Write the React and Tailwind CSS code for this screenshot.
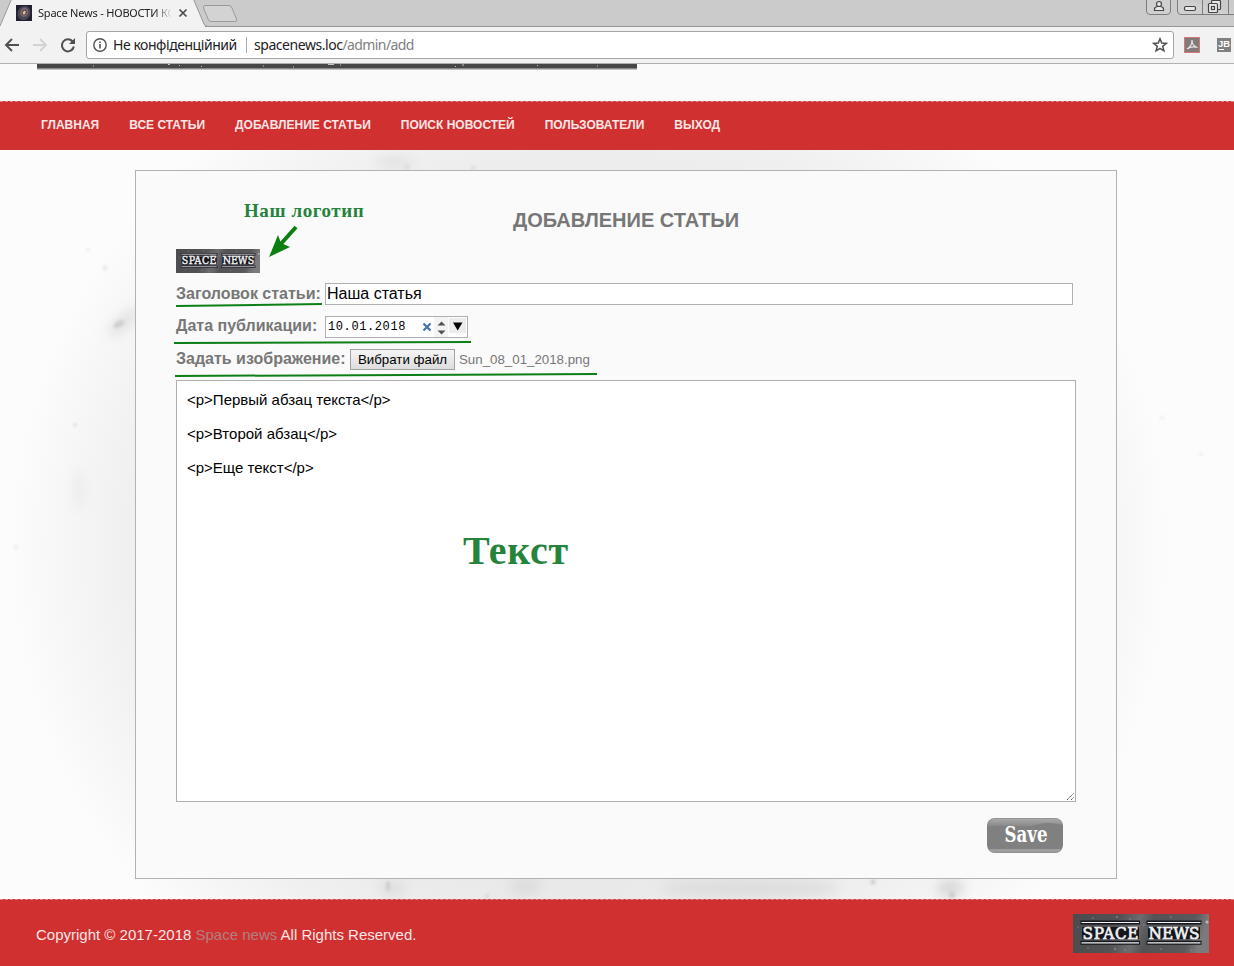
const links = ['ГЛАВНАЯ', 'ВСЕ СТАТЬИ', 'ДОБАВЛЕНИЕ СТАТЬИ', 'ПОИСК НОВОСТЕЙ', 'ПОЛЬЗОВАТЕЛИ', 'ВЫХОД'];

function Logo({ className }) {
  return (
    <svg viewBox="0 0 136 39" preserveAspectRatio="none" className={className}>
      <defs>
        <linearGradient id="steel" x1="0" y1="0" x2="1" y2="0.1">
          <stop offset="0" stopColor="#4c4c4e" />
          <stop offset=".35" stopColor="#525255" />
          <stop offset=".5" stopColor="#6c6c6f" />
          <stop offset=".6" stopColor="#535356" />
          <stop offset=".9" stopColor="#59595c" />
          <stop offset="1" stopColor="#7b7b7e" />
        </linearGradient>
      </defs>
      <rect width="136" height="39" fill="url(#steel)" />
      <g fill="#b9b9bb">
        <circle cx="20" cy="4" r=".6" /><circle cx="44" cy="3" r=".7" /><circle cx="57" cy="5" r=".6" />
        <circle cx="98" cy="3" r=".6" /><circle cx="15" cy="34" r=".5" /><circle cx="42" cy="35" r=".7" />
        <circle cx="52" cy="36" r=".6" /><circle cx="88" cy="35" r=".6" /><circle cx="5" cy="13" r=".5" />
        <circle cx="134" cy="8" r="1.500" /><circle cx="71" cy="11" r=".6" /><circle cx="118" cy="36" r=".5" />
      </g>
      <path d="M7.500 8.500H67M73.500 8.500H128.500M7.500 28.800H67M73.500 28.800H128.500" stroke="#15171f" strokeWidth="4" />
      <path d="M8.500 8.500H66M74.500 8.500H127.500M8.500 28.800H66M74.500 28.800H127.500" stroke="#f4f4f4" strokeWidth="1.200" />
      <g fontFamily="'DejaVu Serif Condensed','DejaVu Serif',serif" fontSize="17" strokeLinejoin="round">
        <g fill="#15171f" stroke="#15171f" strokeWidth="4" aria-hidden="true">
          <path d="M10 14H65V24H10ZM76 14H126V24H76Z" strokeWidth="2" />
        </g>
        <g fill="#f0f0f0" stroke="#f0f0f0" strokeWidth=".7">
          <text x="9.500" y="25" textLength="56" lengthAdjust="spacing">SPACE</text>
          <text x="75.500" y="25" textLength="51" lengthAdjust="spacingAndGlyphs">NEWS</text>
        </g>
      </g>
    </svg>
  );
}

function Browser() {
  return (
    <header className="h-16 shrink-0 bg-[#f2f2f2] border-b border-[#b0b0b0]">
      <div className="relative h-[27px] bg-[#cbcbcb]">
        <svg width="1234" height="27" className="absolute inset-0">
          <path d="M0 26.500H1234" stroke="#969696" />
          <path d="M-1 27L12 -2H193L205 26.500V27Z" fill="#f2f2f2" />
          <path d="M0 26L12 -2M193 -2L204 24Q205 26.500 208 26.500" fill="none" stroke="#969696" />
          <path d="M205 5.500H229Q231 5.500 232 8L236.500 19Q237.500 21.500 235 21.500H211Q209 21.500 208 19L203.500 8Q203 5.500 205 5.500Z" fill="#d3d3d3" stroke="#999" />
          <rect x="16" y="5" width="16" height="16" fill="#202030" />
          <g fill="none" transform="rotate(25 24 13)">
            <ellipse cx="24" cy="13" rx="5" ry="6" stroke="#4d4858" strokeWidth="2.500" />
            <ellipse cx="24" cy="12.500" rx="3" ry="3.800" stroke="#7b6868" strokeWidth="2" />
          </g>
          <ellipse cx="24" cy="12.500" rx="1.500" ry="2.200" fill="#e5bd98" transform="rotate(25 24 13)" />
          <path d="M179.500 9.500L186.500 16.500M186.500 9.500L179.500 16.500" stroke="#4a4a4a" strokeWidth="1.700" />
          <g fill="#d0d0d0" stroke="#7d7d7d">
            <path d="M1146.500 -2V11Q1146.500 14.500 1150 14.500H1167Q1170.500 14.500 1170.500 11V-2" />
            <path d="M1177.500 -2V11Q1177.500 14.500 1181 14.500H1240M1202.500 0V14M1228.500 0V14" />
          </g>
          <g fill="#e8e8e8" stroke="#444" strokeWidth="1.200">
            <path d="M1154.500 10.500V9Q1154.500 7 1157.500 6.500H1160.500Q1163.500 7 1163.500 9V10.500Z" />
            <circle cx="1159" cy="4" r="2.500" />
            <rect x="1184.500" y="6.500" width="11" height="4" rx="1.500" />
            <rect x="1211.500" y="0.500" width="9" height="9" rx="1" />
            <rect x="1208.500" y="3.500" width="9" height="9" rx="1" />
            <rect x="1211.500" y="6.500" width="3" height="3" />
          </g>
        </svg>
        <div className="relative ml-[38px] w-[136px] whitespace-nowrap pt-[4px] text-[11px] leading-[17px] tracking-[-0.2px] text-[#222] font-['Noto_Sans',sans-serif] [mask-image:linear-gradient(to_right,black_116px,transparent_134px)]">
          Space News - НОВОСТИ КО
        </div>
      </div>
      <div className="flex h-9 items-center">
        <svg width="86" height="36" className="shrink-0" fill="none">
          <path d="M19 18H6M12 12L6 18L12 24" stroke="#505050" strokeWidth="1.900" />
          <path d="M33 18H46M40 12L46 18L40 24" stroke="#d2d2d2" strokeWidth="1.900" />
          <path d="M72.500 14.500A6 6 0 1 0 73.800 19.500" stroke="#505050" strokeWidth="2" />
          <path d="M75 11V17H69Z" fill="#505050" />
        </svg>
        <div className="flex h-7 w-[1088px] shrink-0 items-center rounded-[3px] border border-[#a5a5a5] bg-white pl-[6px] pr-[5px] font-['Noto_Sans',sans-serif] text-[14px]">
          <svg width="14" height="14" fill="none" stroke="#505050" strokeWidth="1.400" className="shrink-0">
            <circle cx="7" cy="7" r="6.200" /><path d="M7 6V10.500M7 3.400V5" strokeWidth="1.600" />
          </svg>
          <span className="ml-[6px] w-[125px] whitespace-nowrap pb-[2px] tracking-[-0.45px] text-[#222]">Не конфіденційний</span>
          <span className="ml-2 mr-[7px] h-4 w-px bg-[#aaa]" />
          <span className="whitespace-nowrap pb-[2px] tracking-[-0.45px] text-[#222]">spacenews.loc<span className="tracking-[-0.6px] text-[#808080]">/admin/add</span></span>
          <svg width="16" height="16" viewBox="0 0 16 16" className="ml-auto shrink-0" fill="none" stroke="#505050" strokeWidth="1.500">
            <path d="M8 1.800L9.700 6.100L14.300 6.400L10.700 9.300L11.900 13.800L8 11.300L4.100 13.800L5.300 9.300L1.700 6.400L6.300 6.100Z" />
          </svg>
        </div>
        <svg width="60" height="36" className="shrink-0">
          <rect x="10.500" y="10.500" width="15" height="15" fill="#807b7b" stroke="#d67777" />
          <path d="M13 22Q18 19 18 13Q18 19 23.500 20.500Q18 18.500 13 22Z" fill="none" stroke="#e8e2e2" strokeWidth="1.200" />
          <rect x="43" y="11" width="14" height="14" fill="#808080" />
          <text x="44" y="19.500" fontSize="9" fontWeight="700" fill="#fff" textLength="12" lengthAdjust="spacingAndGlyphs" fontFamily="Liberation Sans,sans-serif">JB</text>
          <path d="M45 22.500H50" stroke="#fff" />
        </svg>
      </div>
    </header>
  );
}

function Backdrop() {
  return (
    <svg width="1234" height="749" className="absolute inset-0">
      <defs>
        <radialGradient id="haze">
          <stop offset="0" stopColor="#e2e2e2" />
          <stop offset=".6" stopColor="#e8e8e8" />
          <stop offset=".8" stopColor="#f0f0f0" />
          <stop offset="1" stopColor="#fcfcfc" />
        </radialGradient>
        <filter id="small" x="-100%" y="-100%" width="300%" height="300%"><feGaussianBlur stdDeviation="6" /></filter>
        <filter id="dot" x="-100%" y="-100%" width="300%" height="300%"><feGaussianBlur stdDeviation="1.500" /></filter>
      </defs>
      <rect width="1234" height="749" fill="#fcfcfc" />
      <ellipse cx="590" cy="400" rx="580" ry="540" fill="url(#haze)" />
      <g filter="url(#small)">
        <ellipse cx="124" cy="172" rx="20" ry="7" transform="rotate(-40 124 172)" fill="#e2e2e2" />
        <ellipse cx="79" cy="340" rx="5" ry="22" fill="#ebebeb" />
        <ellipse cx="395" cy="12" rx="20" ry="6" fill="#e2e2e2" />
        <ellipse cx="393" cy="738" rx="14" ry="9" fill="#e0e0e0" />
        <ellipse cx="525" cy="736" rx="16" ry="9" fill="#dcdcdc" />
        <ellipse cx="640" cy="740" rx="14" ry="9" fill="#eaeaea" />
        <ellipse cx="750" cy="738" rx="90" ry="10" fill="#dedede" />
        <ellipse cx="950" cy="738" rx="14" ry="9" fill="#d8d8d8" />
      </g>
      <g fill="#dddddd" filter="url(#dot)">
        <ellipse cx="119" cy="174" rx="6" ry="3" transform="rotate(-30 119 174)" fill="#cecece" />
        <circle cx="105" cy="118" r="2" /><circle cx="88" cy="100" r="1.500" /><circle cx="75" cy="275" r="2" />
        <circle cx="16" cy="397" r="1.500" /><circle cx="407" cy="17" r="3" /><circle cx="473" cy="18" r="2.500" />
        <ellipse cx="388" cy="736" rx="2" ry="5" fill="#cccccc" /><circle cx="873" cy="732" r="2.500" fill="#cccccc" />
        <circle cx="952" cy="745" r="3" fill="#cccccc" /><circle cx="487" cy="746" r="2" fill="#d0d0d0" />
        <circle cx="1162" cy="268" r="2" fill="#ececec" /><circle cx="1201" cy="304" r="2" fill="#ececec" />
      </g>
    </svg>
  );
}

export default function App() {
  return (
    <div className="flex h-[966px] w-[1234px] flex-col overflow-hidden bg-[#fafafa] font-['Liberation_Sans',Arial,sans-serif]">
      <Browser />
      <div className="h-[37px] shrink-0 pl-[37px]">
        <svg width="600" height="7">
          <rect width="600" height="4.500" fill="#474747" />
          <rect y="4" width="600" height="1.500" fill="#8a8a8a" />
          <path d="M131 .500H133M142 1.500H143M56 2H57M164 2.500H165M226 2H227M256 3H257M291 .500H297M303 1H304M425 1H427M418 2.500H419M500 1.500H501M560 2H561" stroke="#c4c4c4" />
        </svg>
      </div>
      <nav className="flex h-[49px] shrink-0 gap-[30px] border-t border-dashed border-[#d88] bg-[#d03030] pl-[41px] text-[12px] font-bold leading-[47px] text-[#fbe6e6]">
        {links.map((l) => <a key={l} className="whitespace-nowrap">{l}</a>)}
      </nav>

      <main className="relative h-[749px] shrink-0 pl-[135px] pt-5">
        <Backdrop />
        <section className="relative h-[709px] w-[982px] border border-[#b2b2b2] bg-[#fafafa] px-10 text-[#777]">
          <h1 className="pt-[37px] text-center text-[20px] font-bold leading-6">ДОБАВЛЕНИЕ СТАТЬИ</h1>
          <div className="mt-[17px] h-6"><Logo className="h-6 w-[84px]" /></div>
          <div className="mt-[10px] flex h-[22px] items-center">
            <label className="w-[149px] whitespace-nowrap text-[16px] font-bold">Заголовок статьи:</label>
            <div className="h-[22px] w-[748px] border border-[#b0b0b0] bg-white pl-px text-[16px] leading-5 text-black">Наша статья</div>
          </div>
          <div className="mt-[11px] flex h-[22px] items-center">
            <label className="w-[149px] whitespace-nowrap pb-[2px] text-[16px] font-bold">Дата публикации:</label>
            <div className="flex h-[22px] w-[143px] items-center border border-[#b0b0b0] bg-white pl-[2px] text-black">
              <span className="w-[96px] font-['Liberation_Mono',monospace] text-[12px] tracking-[0.6px]">10.01.2018</span>
              <svg width="45" height="20" className="shrink-0">
                <path d="M1.500 6.500L8.500 13.500M8.500 6.500L1.500 13.500" stroke="#4a70b0" strokeWidth="2.200" />
                <path d="M12 0H26V20H12Z" fill="#f3f3f3" /><path d="M27 1H44V16H27Z" fill="#ececec" />
                <path d="M15.500 8.500L19.500 4.500L23.500 8.500ZM15.500 13.500L19.500 17.500L23.500 13.500Z" fill="#505050" />
                <path d="M31 5.500H40.500L35.700 13.500Z" fill="#000" />
              </svg>
            </div>
          </div>
          <div className="mt-[10px] flex h-[22px] items-center">
            <label className="w-[174px] whitespace-nowrap text-[16px] font-bold">Задать изображение:</label>
            <button className="h-[21px] w-[105px] whitespace-nowrap border border-[#a2a2a2] bg-gradient-to-b from-[#f5f5f5] to-[#dddddd] text-[13.3px] leading-[19px] text-black">Вибрати файл</button>
            <span className="ml-1 whitespace-nowrap pt-px text-[13.3px]">Sun_08_01_2018.png</span>
          </div>
          <div className="relative mt-[10px] h-[422px] w-[900px] border border-[#b0b0b0] bg-white pl-[10px] pt-[10px] text-[15px] leading-[17px] text-black">
            <p>&lt;p&gt;Первый абзац текста&lt;/p&gt;</p>
            <p className="mt-[17px]">&lt;p&gt;Второй абзац&lt;/p&gt;</p>
            <p className="mt-[17px]">&lt;p&gt;Еще текст&lt;/p&gt;</p>
            <svg width="9" height="9" className="absolute bottom-0 right-0"><path d="M1 8L8 1M5 8L8 5" stroke="#555" strokeDasharray="1.400 .600" /></svg>
          </div>
          <div className="mt-4 flex justify-end pr-[13px]">
            <button className="h-[35px] w-[76px]">
              <svg width="76" height="35">
                <defs><linearGradient id="gloss" x1="0" y1="0" x2="0" y2="1"><stop offset="0" stopColor="#aaa" /><stop offset="1" stopColor="#858585" /></linearGradient></defs>
                <rect width="76" height="35" rx="8" fill="#808080" />
                <path d="M8 .500H68Q75 1 75.500 7Q60 3 49 7Q43 9 20 8Q6 7 .500 9Q1 1 8 .500Z" fill="url(#gloss)" />
                <path d="M1 31H75Q73 34.500 68 34.500H8Q3 34.500 1 31Z" fill="#9d9d9d" />
                <text x="17.500" y="24" fill="#fff" fontWeight="700" fontSize="23" textLength="43" lengthAdjust="spacingAndGlyphs" fontFamily="'DejaVu Serif Condensed','DejaVu Serif',serif">Save</text>
              </svg>
            </button>
          </div>

          <div className="absolute left-[108px] top-[28px] whitespace-nowrap font-['Liberation_Serif',serif] text-[19px] font-bold leading-6 tracking-[0.58px] text-[#25833b]">Наш логотип</div>
          <div className="absolute left-[327px] top-[356px] whitespace-nowrap font-['Liberation_Serif',serif] text-[40px] font-bold leading-[48px] tracking-[0.7px] text-[#25833b]">Текст</div>
          <svg width="470" height="220" className="pointer-events-none absolute left-0 top-0">
            <path d="M160 56L143 75" stroke="#0b8010" strokeWidth="4" />
            <path d="M133 86L142 64L145 72L154 76Z" fill="#0b8010" />
            <g stroke="#0d7f16" strokeWidth="2"><path d="M40 135L186 133M38 172L335 171M39 205L461 203" /></g>
          </svg>
        </section>
      </main>

      <footer className="flex h-[67px] shrink-0 items-start justify-between border-t border-dashed border-[#d88] bg-[#d03030] pl-9 pr-[25px] pt-[14px]">
        <p className="whitespace-nowrap pt-[12px] text-[15px] leading-[18px] text-[#fbe6e6]">Copyright © 2017-2018 <span className="text-[#b08080]">Space news</span> All Rights Reserved.</p>
        <Logo className="h-[39px] w-[136px]" />
      </footer>
    </div>
  );
}
